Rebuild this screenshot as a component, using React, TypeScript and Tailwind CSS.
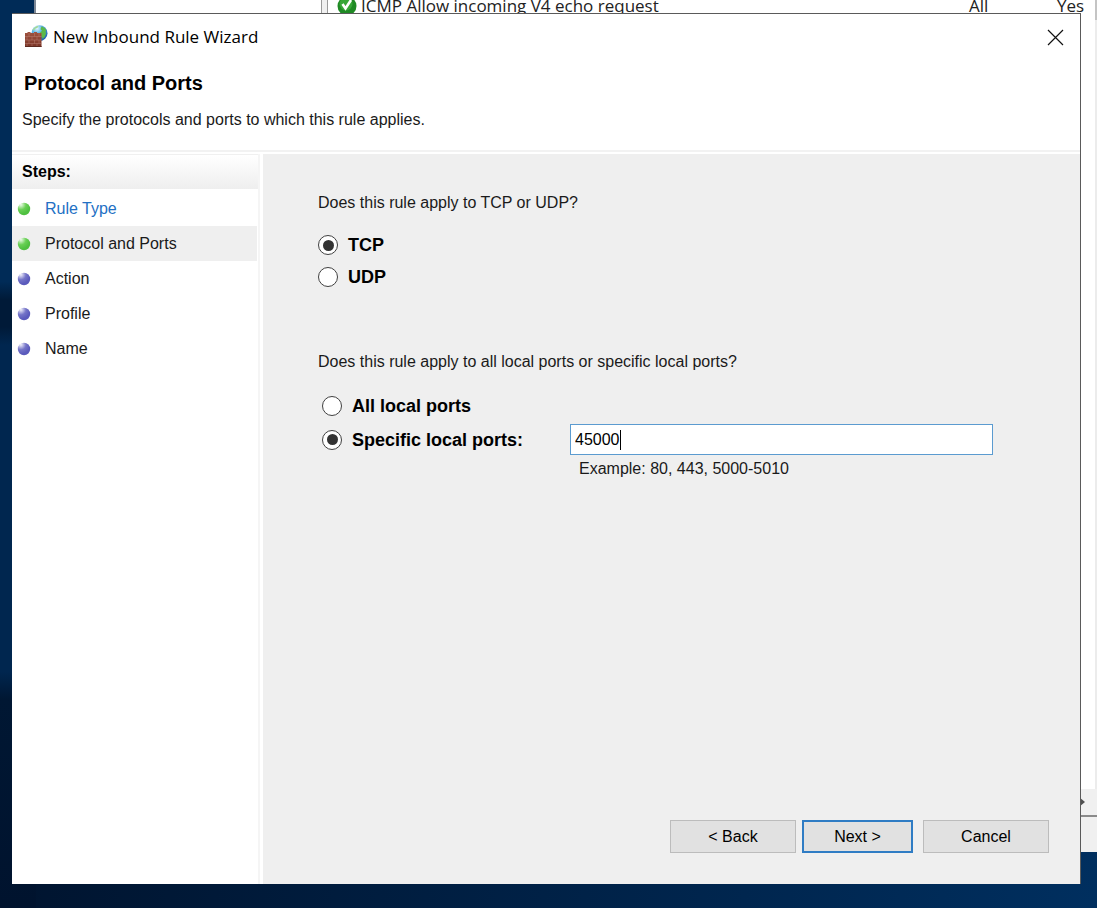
import React, { useState } from 'react';

// steps on the left side of the wizard
const steps = [
  { name: 'Rule Type', done: true },
  { name: 'Protocol and Ports', done: true, current: true },
  { name: 'Action' },
  { name: 'Profile' },
  { name: 'Name' },
];

const radioClass =
  "grid h-5 w-5 shrink-0 appearance-none place-content-center rounded-full border-[1.5px] border-[#404040] bg-white before:h-[11px] before:w-[11px] before:rounded-full checked:before:bg-[#333333] checked:before:content-['']";

const FirewallIcon = () => (
  <svg width="24" height="24" viewBox="0 0 24 24" aria-hidden="true">
    <defs>
      <radialGradient id="globe" cx="0.35" cy="0.2" r="0.85">
        <stop offset="0" stopColor="#e4f7ff" />
        <stop offset="0.35" stopColor="#62b8e6" />
        <stop offset="1" stopColor="#1557a6" />
      </radialGradient>
      <linearGradient id="bricks" x1="0" y1="0" x2="0" y2="1">
        <stop offset="0" stopColor="#a05340" />
        <stop offset="1" stopColor="#7a3527" />
      </linearGradient>
    </defs>
    <circle cx="15.500" cy="8.200" r="8" fill="url(#globe)" />
    <path d="M17.500 1.500c2 .5 3.700 1.800 4.800 3.600l-.8 1.400.6 2-1.400 3.500-2 1.800-1-2.500-2-1.500.6-2.500 1.800-1.500-1.600-1.500z" fill="#5cb84a" />
    <path d="M8.500 5c1.300-2.300 3.500-4 6-4.300l-1 2-2.500 1-1 1.800z" fill="#a4dc90" />
    <path d="M1 8h2.500V7h3v1H10V7h3v1h4.500v14H1z" fill="url(#bricks)" />
    <path d="M1 11.500h16.500M1 15h16.500M1 18.500h16.500M5 8v3.500M10.500 8v3.500M15 8v3.500M3 11.500V15M8 11.500V15M13 11.500V15M5 15v3.500M10.500 15v3.500M15 15v3.500M3 18.500V22M8 18.500V22M13 18.500V22" stroke="#c08a7c" strokeWidth="0.6" strokeOpacity="0.7" fill="none" />
    <path d="M1 21.500h16.500" stroke="#5d2a20" strokeWidth="1" />
  </svg>
);

const CheckIcon = () => (
  <svg width="20" height="20" viewBox="0 0 20 20" aria-hidden="true" className="block shrink-0">
    <circle cx="10" cy="10" r="9.500" fill="#1f8a24" />
    <circle cx="9" cy="8" r="6.500" fill="#37a637" />
    <path d="M5.500 8l3 4.500L14 4" stroke="#fff" strokeWidth="2.600" fill="none" />
  </svg>
);

const StepDot = ({ done }: { done?: boolean }) => (
  <svg width="14" height="14" viewBox="0 0 14 14" aria-hidden="true" className="shrink-0">
    <defs>
      <radialGradient id={done ? 'dotGreen' : 'dotBlue'} cx="0.25" cy="0.15" r="0.75">
        <stop offset="0" stopColor={done ? '#eefbea' : '#f0f0fb'} />
        <stop offset="0.55" stopColor={done ? '#69d055' : '#7474c8'} />
        <stop offset="1" stopColor={done ? '#4fc040' : '#5a5abc'} />
      </radialGradient>
    </defs>
    <circle cx="7" cy="7" r="6.200" fill={done ? 'url(#dotGreen)' : 'url(#dotBlue)'} />
  </svg>
);

// the firewall window behind the dialog, only its edges are visible
const FirewallWindow = () => (
  <div className="absolute top-0 right-0 bottom-14 left-[34px] flex flex-col overflow-hidden border-l-2 border-[#7d8896] bg-[#f0f0f0]">
    <div className="flex flex-1 border-b-2 border-[#8a8a8a]">
      <div className="w-[286px] border-r border-[#9a9a9a] bg-white"></div>
      <div className="w-[5px] bg-[#f0f0f0]"></div>
      <div className="flex flex-1 flex-col border-l border-[#9a9a9a]">
        <div className="flex flex-1">
          <div className="flex-1 bg-white">
            <table className="w-full table-fixed font-['Open_Sans',sans-serif] text-[17px] leading-[12px] text-[#222222]">
              <tbody>
                <tr className="h-3">
                  <td className="p-0 pl-[9px]">
                    <div className="flex h-3 items-center gap-1">
                      <CheckIcon />
                      <span className="whitespace-nowrap">ICMP Allow incoming V4 echo request</span>
                    </div>
                  </td>
                  <td className="w-[88px] p-0">All</td>
                  <td className="w-[38px] p-0">Yes</td>
                </tr>
              </tbody>
            </table>
          </div>
          <div className="w-0.5 bg-[#ececec]">
            <div className="h-5 bg-[#c4c4c4]"></div>
          </div>
        </div>
        <div className="flex h-[26px] items-center justify-end bg-[#f0f0f0] pr-3">
          <svg width="8" height="10" viewBox="0 0 8 10" aria-hidden="true">
            <path d="M2 0l6 5-6 5z" fill="#505050" />
          </svg>
        </div>
      </div>
    </div>
    <div className="h-[35px]"></div>
  </div>
);

const App = () => {
  const [protocol, setProtocol] = useState('TCP');
  const [portMode, setPortMode] = useState('specific');
  const [ports, setPorts] = useState('45000');

  return (
    <div className="relative flex min-h-screen bg-linear-to-r from-[#00142f] to-[#002f5f] pt-[13px] pr-4 pb-6 pl-3 font-['Liberation_Sans',Arial,sans-serif] text-[16px] leading-5 text-[#1a1a1a]">
      {/* strip of wallpaper left of the windows */}
      <div className="absolute inset-y-0 left-0 w-9 bg-[linear-gradient(#002b57_31%,#001a38_33%,#001a38_36%,#00264f_38%,#00264f_74%,#001733_77%,#00132e)]"></div>
      <FirewallWindow />

      <div className="relative flex flex-1 flex-col border-t border-r border-[#5a5a5a] bg-white">
        <header className="border-b-2 border-[#f2f2f2] pb-5">
          <div className="flex h-[46px] items-center pr-4 pl-3">
            <FirewallIcon />
            <h1 className="flex-1 pl-[5px] font-['Open_Sans',sans-serif] text-[17px] text-black">New Inbound Rule Wizard</h1>
            <button aria-label="Close" className="p-0">
              <svg width="17" height="17" viewBox="0 0 17 17" aria-hidden="true">
                <path d="M1 1l15 15M16 1L1 16" stroke="#111" strokeWidth="1.200" />
              </svg>
            </button>
          </div>
          <h2 className="pt-[11px] pl-3 text-[20px] leading-6 font-bold text-black">Protocol and Ports</h2>
          <p className="pt-[15px] pl-[10px]">Specify the protocols and ports to which this rule applies.</p>
        </header>

        <div className="flex flex-1 pt-0.5">
          <nav className="w-[248px] shrink-0 border-r-2 border-[#f5f5f5]">
            <h3 className="border-t border-[#f0f0f0] bg-linear-to-b from-white to-[#eeeeee] py-[7px] pl-[10px] text-[16px] font-bold text-black">Steps:</h3>
            <ul className="pt-0.5 pr-px">
              {steps.map((step) => (
                <li
                  key={step.name}
                  className={step.current ? 'flex h-[35px] items-center gap-3.5 bg-[#efefef] pl-[5px]' : 'flex h-[35px] items-center gap-3.5 pl-[5px]'}
                >
                  <StepDot done={step.done} />
                  {step.done && !step.current ? <a href="#" className="text-[#2370c4]">{step.name}</a> : <span>{step.name}</span>}
                </li>
              ))}
            </ul>
          </nav>

          <main className="ml-[3px] flex flex-1 flex-col bg-[#efefef]">
            <div className="flex-1 pt-[39px] pr-[87px] pl-[55px]">
              <fieldset>
                <legend>Does this rule apply to TCP or UDP?</legend>
                <div className="flex flex-col items-start gap-3 pt-[22px] text-[18px] font-bold text-black">
                  <label className="flex items-center gap-2.5">
                    <input type="radio" name="protocol" className={radioClass} checked={protocol === 'TCP'} onChange={() => setProtocol('TCP')} />
                    TCP
                  </label>
                  <label className="flex items-center gap-2.5">
                    <input type="radio" name="protocol" className={radioClass} checked={protocol === 'UDP'} onChange={() => setProtocol('UDP')} />
                    UDP
                  </label>
                </div>
              </fieldset>

              <fieldset className="pt-[65px]">
                <legend className="contents">Does this rule apply to all local ports or specific local ports?</legend>
                <div className="flex flex-col pt-6 pl-1 text-[18px] font-bold text-black">
                  <label className="flex items-center gap-2.5">
                    <input type="radio" name="ports" className={radioClass} checked={portMode === 'all'} onChange={() => setPortMode('all')} />
                    All local ports
                  </label>
                  <div className="flex items-center pt-2">
                    <label className="flex w-[248px] shrink-0 items-center gap-2.5">
                      <input type="radio" name="ports" className={radioClass} checked={portMode === 'specific'} onChange={() => setPortMode('specific')} />
                      Specific local ports:
                    </label>
                    <div className="relative flex-1 text-[16px] font-normal">
                      <input
                        type="text"
                        aria-label="Specific local ports"
                        className="block h-[31px] w-full border border-[#5b9bd0] bg-white px-1 caret-transparent outline-none"
                        value={ports}
                        onChange={(e) => setPorts(e.target.value)}
                      />
                      <span className="absolute top-1.5 ml-[6px] h-5 w-px bg-black" style={{ left: `${ports.length}ch` }}></span>
                    </div>
                  </div>
                </div>
                <p className="pt-1 pl-[261px]">Example: 80, 443, 5000-5010</p>
              </fieldset>
            </div>

            <div className="flex justify-end pr-[31px] pb-[31px] text-black">
              <button className="h-[33px] w-[126px] border border-[#bcbcbc] bg-[#e1e1e1]">&lt; Back</button>
              <button className="mr-2.5 ml-1.5 h-[33px] w-[111px] border-2 border-[#2f7cc4] bg-[#e1e1e1]">Next &gt;</button>
              <button className="h-[33px] w-[126px] border border-[#bcbcbc] bg-[#e1e1e1]">Cancel</button>
            </div>
          </main>
        </div>
      </div>
    </div>
  );
};

export default App;
